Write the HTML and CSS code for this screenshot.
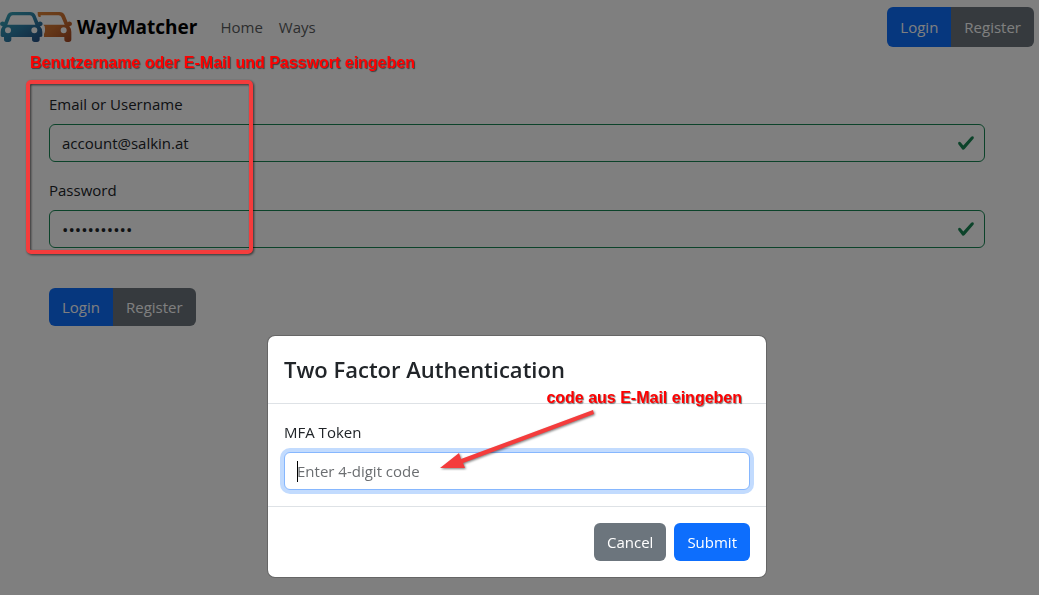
FILE: index.html
```html
<!DOCTYPE html>
<html lang="en">
<head>
<meta charset="utf-8">
<meta name="viewport" content="width=device-width, initial-scale=1">
<title>WayMatcher</title>
<link rel="stylesheet" href="styles.css">
</head>
<body>
<header class="navbar">
  <a class="brand" href="#">
    <svg class="brand-logo" viewBox="0 0 216 90" aria-hidden="true">
      <defs>
        <linearGradient id="blue" x1="0" y1="0" x2="1" y2="1"><stop offset="0" stop-color="#38a6b4"/><stop offset=".5" stop-color="#2c80a8"/><stop offset="1" stop-color="#254a80"/></linearGradient>
        <linearGradient id="orange" x1="0" y1="0" x2="1" y2="1"><stop offset="0" stop-color="#de8438"/><stop offset=".5" stop-color="#cc7030"/><stop offset="1" stop-color="#a04422"/></linearGradient>
      </defs>
      <path fill="url(#orange)" fill-rule="evenodd" d="M113 0H178Q190 0 194 9L203 31Q205 28 211 29Q216 30 216 36Q216 41 208 43Q214 50 214 60V82Q214 90 206 90H201Q193 90 193 82V75H132V66Q137 58 134 43L130 38H194L184 15Q182 10 176 10H122V15H116Q112 8 113 0ZM191 46A9 9 0 1 0 191 64A9 9 0 1 0 191 46Z"/>
      <path fill="url(#blue)" fill-rule="evenodd" d="M38 0H90Q102 0 106 9L115 31Q117 28 123 29Q128 30 128 36Q128 41 120 43Q127 50 127 60V72Q127 75 119 75V82Q119 90 111 90H104Q96 90 96 82V75H34V82Q34 90 26 90H20Q12 90 12 82V75Q2 75 2 71V60Q2 50 8 43Q0 41 0 36Q0 30 5 29Q11 28 13 31L22 9Q26 0 38 0ZM38 10Q33 10 31 15L22 38H106L97 15Q95 10 90 10ZM24 46A9 9 0 1 0 24 64A9 9 0 1 0 24 46ZM103 46A9 9 0 1 0 103 64A9 9 0 1 0 103 46Z"/>
    </svg>
    <span>WayMatcher</span>
  </a>
  <nav class="nav-links">
    <a href="#">Home</a>
    <a href="#">Ways</a>
  </nav>
  <div class="btn-group btn-group-nav">
    <button class="btn btn-primary" type="button">Login</button>
    <button class="btn btn-secondary" type="button">Register</button>
  </div>
</header>

<main class="content">
  <form class="login-form">
    <div class="field">
      <label for="username">Email or Username</label>
      <div class="control">
        <input class="input is-valid" id="username" type="text" value="account@salkin.at">
        <svg class="check" viewBox="0 0 8 8" aria-hidden="true"><path d="M2.3 6.73.6 4.53c-.4-1.04.46-1.4 1.1-.8l1.1 1.4 3.4-3.8c.6-.63 1.6-.27 1.2.7l-4 4.6c-.43.5-.8.4-1.1.1z"/></svg>
      </div>
    </div>
    <div class="field">
      <label for="password">Password</label>
      <div class="control">
        <input class="input input-password is-valid" id="password" type="password" value="hunter2hunt">
        <svg class="check" viewBox="0 0 8 8" aria-hidden="true"><path d="M2.3 6.73.6 4.53c-.4-1.04.46-1.4 1.1-.8l1.1 1.4 3.4-3.8c.6-.63 1.6-.27 1.2.7l-4 4.6c-.43.5-.8.4-1.1.1z"/></svg>
      </div>
    </div>
    <div class="btn-group">
      <button class="btn btn-primary" type="button">Login</button>
      <button class="btn btn-secondary" type="button">Register</button>
    </div>
  </form>
</main>

<div class="backdrop">
  <section class="modal" role="dialog" aria-labelledby="modal-title">
    <header class="modal-header"><h1 class="modal-title" id="modal-title">Two Factor Authentication</h1></header>
    <div class="modal-body">
      <label for="token">MFA Token</label>
      <div class="control">
        <input class="input is-focused" id="token" type="text" placeholder="Enter 4-digit code">
        <span class="caret"></span>
      </div>
      <p class="note note-code">code aus E-Mail eingeben</p>
      <svg class="arrow" viewBox="0 0 158 62" aria-hidden="true">
        <path d="M153 0 154 4 23 53 25 58 0 58 19 43 21 49Z"/>
      </svg>
    </div>
    <footer class="modal-footer">
      <button class="btn btn-secondary" type="button">Cancel</button>
      <button class="btn btn-primary" type="button">Submit</button>
    </footer>
  </section>
</div>

<p class="note note-login">Benutzername oder E-Mail und Passwort eingeben</p>
<div class="frame"></div>
</body>
</html>
```
FILE: styles.css
```css
* { box-sizing: border-box; }

body {
  margin: 0;
  min-height: 100vh;
  background: #fff;
  color: #212529;
  font: 15px/24px "Open Sans", "Noto Sans", sans-serif;
}

button, input { font: inherit; }

.navbar {
  display: flex;
  align-items: center;
  gap: 16px;
  padding: 7px 5px 7px 0;
}

.brand {
  display: flex;
  align-items: center;
  gap: 5px;
  padding-right: 7px;
  color: #000;
  font-size: 19px;
  font-weight: 700;
  text-decoration: none;
}

.brand-logo { width: 72px; height: 30px; }

.nav-links { display: flex; gap: 16px; flex: 1; }
.nav-links a { color: #595b5d; text-decoration: none; }

.content { padding: 38px 54px 0 49px; }

.field { margin-bottom: 16px; }
.field label, .modal-body label { display: block; margin-bottom: 8px; }

.control { position: relative; }

.input {
  display: block;
  width: 100%;
  height: 38px;
  padding: 6px 12px;
  border: 1px solid #dee2e6;
  border-radius: 6px;
  outline: 0;
  background: #fff;
  color: #212529;
}

.input-password { font-size: 17px; }
.input::placeholder { color: #6b6e71; opacity: 1; }
.is-valid { border-color: #198754; }

.is-focused {
  border-color: #86b7fe;
  box-shadow: 0 0 0 4px #c2dbfe;
  caret-color: transparent;
}

.check {
  position: absolute;
  top: 10px;
  right: 10px;
  width: 18px;
  height: 18px;
  fill: #198754;
}

.caret {
  position: absolute;
  top: 9px;
  left: 13px;
  width: 1px;
  height: 21px;
  background: #000;
}

.btn {
  height: 38px;
  padding: 6px 13px;
  border: 0;
  border-radius: 6px;
  color: #fff;
}

.btn-primary { background: #0d6efd; }
.btn-secondary { background: #6c757d; }

.btn-group { display: inline-flex; }
.login-form .btn-group { margin-top: 24px; }
.btn-group .btn:first-child { border-radius: 6px 0 0 6px; }
.btn-group .btn:last-child { border-radius: 0 6px 6px 0; }
.btn-group-nav .btn { height: 40px; }

.backdrop {
  position: fixed;
  inset: 0;
  display: flex;
  justify-content: center;
  align-items: flex-start;
  padding: 335px 5px 0 0;
  background: rgba(0, 0, 0, .5);
}

.modal {
  width: 100%;
  max-width: 500px;
  border: 1px solid rgba(0, 0, 0, .2);
  border-radius: 8px;
  background: #fff;
  background-clip: padding-box;
}

.modal-header { padding: 16px; border-bottom: 1px solid #dee2e6; }
.modal-title { margin: 0; font-size: 22px; font-weight: 600; line-height: 35px; }
.modal-body { position: relative; padding: 16px; }

.modal-footer {
  display: flex;
  justify-content: flex-end;
  gap: 8px;
  padding: 16px;
  border-top: 1px solid #dee2e6;
}

.note {
  position: absolute;
  margin: 0;
  color: #f00;
  font: 700 16px/20px "Liberation Sans", Arial, sans-serif;
  text-shadow: 1px 1px 1px rgba(0, 0, 0, .5);
  white-space: nowrap;
}

.note-login { top: 53px; left: 30px; }
.note-code { top: -16px; right: 24px; }

.arrow {
  position: absolute;
  top: 6px;
  left: 172px;
  width: 158px;
  height: 62px;
  fill: #f43c3c;
  filter: drop-shadow(1px 1px 1px rgba(0, 0, 0, .5));
}

.frame {
  position: absolute;
  top: 80px;
  left: 26px;
  width: 227px;
  height: 174px;
  border: 4px solid #f43c3c;
  border-radius: 5px;
  filter: drop-shadow(1px 1px 1px rgba(0, 0, 0, .6));
}
```
